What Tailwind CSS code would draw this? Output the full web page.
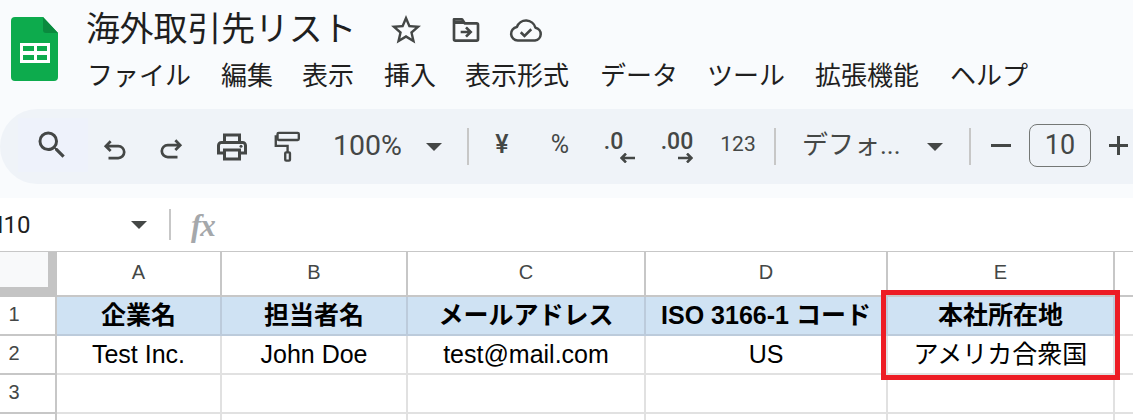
<!DOCTYPE html>
<html lang="ja">
<head>
<meta charset="utf-8">
<script src="https://cdn.jsdelivr.net/npm/@tailwindcss/browser@4"></script>
</head>
<body class="w-[1133px] h-[420px] overflow-hidden bg-white font-['Roboto','Noto_Sans_CJK_JP',sans-serif] text-[#1f1f1f] relative">
<div class="h-[198px] bg-[#f9fbfd] flex flex-col overflow-hidden">
  <div class="h-[109px] flex">
    <svg class="ml-[11px] mt-[17px] w-[47px] h-[64px] shrink-0" viewBox="0 0 47 64">
      <path d="M4 0H32L47 16V60a4 4 0 0 1-4 4H4a4 4 0 0 1-4-4V4a4 4 0 0 1 4-4z" fill="#0dab4d"/>
      <path d="M32 0L47 16H35a3 3 0 0 1-3-3z" fill="#0a8a3e"/>
      <path d="M9 26H39V46H9z" fill="#fff"/>
      <path d="M12 29H23V34H12zM26 29H36V34H26zM12 38H23V43H12zM26 38H36V43H26z" fill="#0dab4d"/>
    </svg>
    <div class="ml-[28px] flex flex-col">
      <div class="h-[46px] flex items-center mt-[7px]">
        <span class="text-[33.8px] leading-[46px] w-[302px] whitespace-nowrap">海外取引先リスト</span>
        <svg class="w-[36px] h-[36px] text-[#444746]" viewBox="0 0 24 24" fill="currentColor"><path d="M22 9.24l-7.19-.62L12 2 9.19 8.63 2 9.24l5.46 4.73L5.82 21 12 17.27 18.18 21l-1.63-7.03L22 9.24zM12 15.4l-3.76 2.27 1-4.28-3.32-2.88 4.38-.38L12 6.1l1.71 4.04 4.38.38-3.32 2.88 1 4.28L12 15.4z"/></svg>
        <svg class="ml-[26px] w-[32px] h-[32px] text-[#444746]" viewBox="0 0 24 24" fill="none" stroke="currentColor" stroke-width="2"><path d="M3 5.5V19a1 1 0 0 0 1 1h16a1 1 0 0 0 1-1V8a1 1 0 0 0-1-1h-9L9 4H3z" stroke-linejoin="round" fill="none"/><path d="M3 5h6l2 2.500H3z" fill="currentColor" stroke="none"/><path d="M8 13.500h7M12 10l3.500 3.500L12 17"/></svg>
        <svg class="ml-[26px] w-[36px] h-[36px] text-[#444746]" viewBox="0 0 24 24" fill="none" stroke="currentColor" stroke-width="1.7"><path d="M6.500 19a4.500 4.500 0 0 1-.6-8.950A6.500 6.500 0 0 1 18.300 10.500 4.300 4.300 0 0 1 18 19z" stroke-linejoin="round"/><path d="M8.500 13.500l2.500 2.500 4.500-4.500"/></svg>
      </div>
      <div class="flex mt-[5px] ml-[1px] text-[26px] leading-[36px] whitespace-nowrap text-[#1f1f1f] gap-[29px]">
        <span class="w-[105px]">ファイル</span><span class="w-[52px]">編集</span><span class="w-[53px]">表示</span><span class="w-[52px]">挿入</span><span class="w-[106px]">表示形式</span><span class="w-[78px]">データ</span><span class="w-[79px]">ツール</span><span class="w-[106px]">拡張機能</span><span>ヘルプ</span>
      </div>
    </div>
  </div>
  <div class="h-[75px] w-[1180px] bg-[#eff3f8] rounded-l-[38px] flex items-center text-[#444746] shrink-0">
    <div class="ml-[18px] w-[70px] h-[54px] bg-[#eef2fb] flex items-center justify-center shrink-0 mt-[-3px]">
      <svg class="w-[36px] h-[36px] mr-[3px] mt-[-1px]" viewBox="0 0 24 24" fill="currentColor"><path d="M15.5 14h-.79l-.28-.27A6.471 6.471 0 0 0 16 9.5 6.5 6.5 0 1 0 9.5 16c1.61 0 3.09-.59 4.23-1.57l.27.28v.79l5 4.99L20.49 19l-4.99-5zm-6 0C7.01 14 5 11.99 5 9.5S7.01 5 9.5 5 14 7.01 14 9.5 11.99 14 9.5 14z"/></svg>
    </div>
    <div class="w-[54px] flex justify-center mt-[8px]"><svg class="w-[26px] h-[26px]" viewBox="0 0 24 24" fill="none" stroke="currentColor" stroke-width="2.5"><path d="M8 3L3.500 7.500 8 12M3.500 7.500H15a5.500 5.500 0 0 1 0 11H6"/></svg></div>
    <div class="w-[58px] flex justify-center mt-[6px]"><svg class="w-[26px] h-[26px]" viewBox="0 0 24 24" fill="none" stroke="currentColor" stroke-width="2.5"><path d="M16 3l4.500 4.500L16 12M20.500 7.500H9a5.500 5.500 0 0 0 0 11h9"/></svg></div>
    <div class="w-[64px] flex justify-center mt-[1px]"><svg class="w-[36px] h-[36px]" viewBox="0 0 24 24" fill="currentColor"><path d="M19 8h-1V3H6v5H5c-1.660 0-3 1.340-3 3v6h4v4h12v-4h4v-6c0-1.660-1.340-3-3-3zM8 5h8v3H8V5zm8 14H8v-4h8v4zm2-4v-2H6v2H4v-4c0-.550.450-1 1-1h14c.550 0 1 .450 1 1v4h-2z"/><circle cx="18" cy="11.500" r="1"/></svg></div>
    <div class="ml-[-4px] w-[54px] flex justify-center"><svg class="w-[26px] h-[33px]" viewBox="0 0 22 26" fill="none" stroke="currentColor" stroke-width="2"><rect x="3" y="1.500" width="18" height="6" rx="1"/><path d="M3 4.500H1.500v8h10V18"/><rect x="9.500" y="18" width="4" height="7" rx=".8"/></svg></div>
    <span class="ml-[19px] w-[93px] text-[28.500px] whitespace-nowrap">100%</span>
    <svg class="w-[16px] h-[8px]" viewBox="0 0 16 8" fill="currentColor"><path d="M0 0H16L8 8z"/></svg>
    <div class="ml-[25px] w-[2px] h-[37px] bg-[#c7c7c7]"></div>
    <span class="w-[68px] text-center text-[25px] font-medium ml-[-1px] mt-[-3px]">¥</span>
    <span class="w-[48px] text-center text-[25px] mt-[-3px]">%</span>
    <div class="w-[68px] flex flex-col items-center mt-[2px] leading-none"><span class="text-[23px] font-medium h-[20px] leading-[20px] mr-[9px]">.0</span><svg class="w-[15px] h-[10px] ml-[18px] mt-[1px]" viewBox="0 0 15 10" fill="none" stroke="currentColor" stroke-width="2.500"><path d="M15 5H2M6 .500L1.500 5 6 9.500"/></svg></div>
    <div class="w-[50px] flex flex-col items-center mt-[2px] leading-none"><span class="text-[23px] font-medium h-[20px] leading-[20px]">.00</span><svg class="w-[15px] h-[10px] ml-[16px] mt-[1px]" viewBox="0 0 15 10" fill="none" stroke="currentColor" stroke-width="2.500"><path d="M0 5h13M9 .500L13.500 5 9 9.500"/></svg></div>
    <span class="w-[72px] text-center text-[21px] mt-[-3px]">123</span>
    <div class="w-[2px] h-[37px] bg-[#c7c7c7]"></div>
    <span class="ml-[26px] w-[125px] text-[26px] whitespace-nowrap mt-[-3px]">デフォ...</span>
    <svg class="w-[16px] h-[8px]" viewBox="0 0 16 8" fill="currentColor"><path d="M0 0H16L8 8z"/></svg>
    <div class="ml-[26px] w-[2px] h-[37px] bg-[#c7c7c7]"></div>
    <svg class="ml-[20px] w-[20px] h-[3px] mt-[-3px]" viewBox="0 0 20 3" fill="currentColor"><path d="M0 0H20V3H0z"/></svg>
    <div class="ml-[18px] w-[62px] h-[43px] border border-[#747775] rounded-[8px] flex items-center justify-center text-[27px] mt-[-2px]">10</div>
    <svg class="ml-[18px] w-[19px] h-[19px] mt-[-3px]" viewBox="0 0 19 19" fill="currentColor"><path d="M8 0h3v8h8v3h-8v8H8v-8H0V8h8z"/></svg>
  </div>
</div>
<div class="h-[53px] flex items-center bg-white">
  <span class="ml-[-3px] w-[133px] text-[24px] leading-none whitespace-nowrap text-[#1f1f1f]">I10</span>
  <svg class="ml-[1px] w-[16px] h-[8px] text-[#444746]" viewBox="0 0 16 8" fill="currentColor"><path d="M0 0H16L8 8z"/></svg>
  <div class="ml-[22px] w-[2px] h-[31px] bg-[#c7c7c7]"></div>
  <span class="ml-[20px] text-[31px] leading-none italic font-bold text-[#a5a8ab] font-['Liberation_Serif',serif] tracking-[-1px] mt-[1px]">fx</span>
</div>
<div class="grid grid-cols-[57px_165px_186px_238px_242px_227px_1fr] grid-rows-[45px_39px_39px_39px_6px] border-t border-[#c7c7c7] font-['Liberation_Sans','Noto_Sans_CJK_JP',sans-serif] text-[25px] text-black whitespace-nowrap">
  <div class="bg-[#c4c4c4] border-r-2 border-b-2 border-[#c4c4c4]"><div class="w-[48px] h-[35px] bg-[#f8f9fa]"></div></div>
  <div class="border-r-2 border-b-2 border-[#c7c7c7] flex items-center justify-center text-[20px] text-[#444746] pb-[3px]">A</div>
  <div class="border-r-2 border-b-2 border-[#c7c7c7] flex items-center justify-center text-[20px] text-[#444746] pb-[3px]">B</div>
  <div class="border-r-2 border-b-2 border-[#c7c7c7] flex items-center justify-center text-[20px] text-[#444746] pb-[3px]">C</div>
  <div class="border-r-2 border-b-2 border-[#c7c7c7] flex items-center justify-center text-[20px] text-[#444746] pb-[3px]">D</div>
  <div class="border-r-2 border-b-2 border-[#c7c7c7] flex items-center justify-center text-[20px] text-[#444746] pb-[3px]">E</div>
  <div class="border-b-2 border-[#c7c7c7]"></div>

  <div class="border-r-2 border-b-2 border-[#c7c7c7] flex items-center justify-center text-[20px] text-[#444746] pr-[27px] pb-[4px]">1</div>
  <div class="bg-[#cfe2f3] border-r-2 border-b-2 border-[#bccbdb] flex items-center justify-center font-bold">企業名</div>
  <div class="bg-[#cfe2f3] border-r-2 border-b-2 border-[#bccbdb] flex items-center justify-center font-bold">担当者名</div>
  <div class="bg-[#cfe2f3] border-r-2 border-b-2 border-[#bccbdb] flex items-center justify-center font-bold">メールアドレス</div>
  <div class="bg-[#cfe2f3] border-r-2 border-b-2 border-[#bccbdb] flex items-center justify-center font-bold">ISO 3166-1 コード</div>
  <div class="bg-[#cfe2f3] border-r-2 border-b-2 border-[#bccbdb] flex items-center justify-center font-bold">本社所在地</div>
  <div class="border-b-2 border-[#e1e1e1]"></div>

  <div class="border-r-2 border-b-2 border-[#c7c7c7] flex items-center justify-center text-[20px] text-[#444746] pr-[27px] pb-[4px]">2</div>
  <div class="border-r-2 border-b-2 border-[#e1e1e1] flex items-center justify-center">Test Inc.</div>
  <div class="border-r-2 border-b-2 border-[#e1e1e1] flex items-center justify-center">John Doe</div>
  <div class="border-r-2 border-b-2 border-[#e1e1e1] flex items-center justify-center">test@mail.com</div>
  <div class="border-r-2 border-b-2 border-[#e1e1e1] flex items-center justify-center">US</div>
  <div class="border-r-2 border-b-2 border-[#e1e1e1] flex items-center justify-center">アメリカ合衆国</div>
  <div class="border-b-2 border-[#e1e1e1]"></div>

  <div class="border-r-2 border-b-2 border-[#c7c7c7] flex items-center justify-center text-[20px] text-[#444746] pr-[27px] pb-[4px]">3</div>
  <div class="border-r-2 border-b-2 border-[#e1e1e1]"></div>
  <div class="border-r-2 border-b-2 border-[#e1e1e1]"></div>
  <div class="border-r-2 border-b-2 border-[#e1e1e1]"></div>
  <div class="border-r-2 border-b-2 border-[#e1e1e1]"></div>
  <div class="border-r-2 border-b-2 border-[#e1e1e1]"></div>
  <div class="border-b-2 border-[#e1e1e1]"></div>

  <div class="border-r-2 border-[#c7c7c7]"></div>
  <div class="border-r-2 border-[#e1e1e1]"></div>
  <div class="border-r-2 border-[#e1e1e1]"></div>
  <div class="border-r-2 border-[#e1e1e1]"></div>
  <div class="border-r-2 border-[#e1e1e1]"></div>
  <div class="border-r-2 border-[#e1e1e1]"></div>
  <div></div>
</div>
<div class="absolute left-[881px] top-[290px] w-[239px] h-[90px] border-[5px] border-[#ed1c24]"></div>
</body>
</html>
